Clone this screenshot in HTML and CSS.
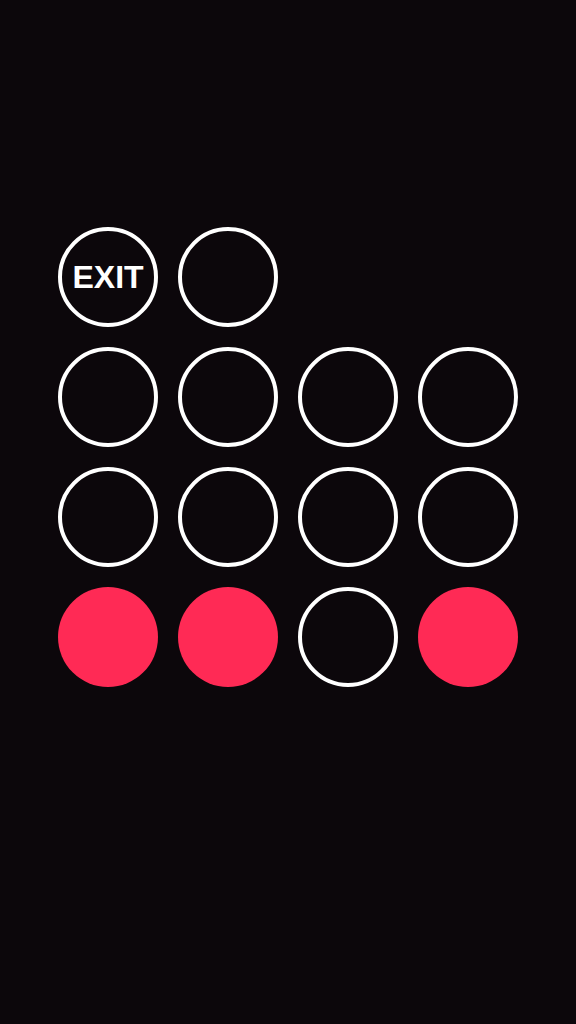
FILE: index.html
```html
<!DOCTYPE html>
<html>
<head>
<meta charset="utf-8">
<link rel="stylesheet" href="styles.css">
</head>
<body>
<div class="grid">
  <div class="dot ring exit">EXIT</div>
  <div class="dot ring"></div>
  <div class="dot empty"></div>
  <div class="dot empty"></div>

  <div class="dot ring"></div>
  <div class="dot ring"></div>
  <div class="dot ring"></div>
  <div class="dot ring"></div>

  <div class="dot ring"></div>
  <div class="dot ring"></div>
  <div class="dot ring"></div>
  <div class="dot ring"></div>

  <div class="dot filled"></div>
  <div class="dot filled"></div>
  <div class="dot ring"></div>
  <div class="dot filled"></div>
</div>
</body>
</html>
```

FILE: styles.css
```css
html, body {
  margin: 0;
  padding: 0;
  background: #0c070b;
  height: 100%;
}
body {
  width: 576px;
  height: 1024px;
  overflow: hidden;
}
.grid {
  display: grid;
  grid-template-columns: repeat(4, 100px);
  grid-auto-rows: 100px;
  gap: 20px;
  padding: 227px 0 0 58px;
}
.dot {
  box-sizing: border-box;
  width: 100px;
  height: 100px;
  border-radius: 50%;
}
.ring {
  border: 4px solid #ffffff;
}
.filled {
  background: #ff2a55;
}
.exit {
  display: flex;
  align-items: center;
  justify-content: center;
  color: #ffffff;
  font-family: "Liberation Sans", Arial, sans-serif;
  font-weight: 700;
  font-size: 32px;
  line-height: 1;
}
```
